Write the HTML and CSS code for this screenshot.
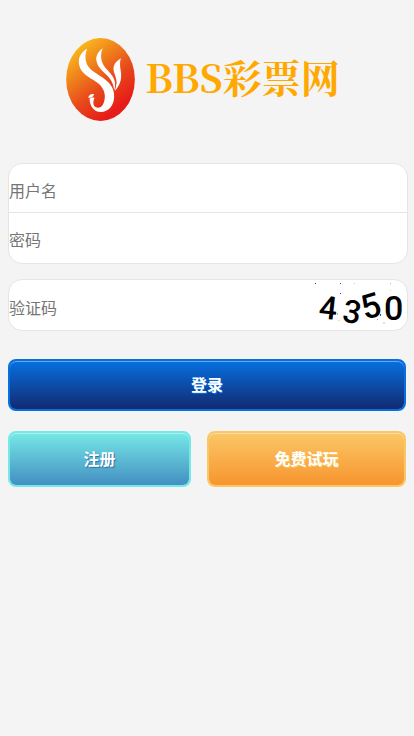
FILE: index.html
```html
<!DOCTYPE html>
<html lang="zh-CN">
<head>
  <meta charset="UTF-8">
  <meta name="viewport" content="width=device-width, initial-scale=1">
  <title>BBS彩票网</title>
  <link rel="stylesheet" href="styles.css">
</head>
<body>

  <header class="logo">
    <svg class="logo-mark" viewBox="22 24 206 249" aria-hidden="true">
      <defs>
        <linearGradient id="flame" x1="0.15" y1="0.05" x2="0.7" y2="0.9">
          <stop offset="0" stop-color="#fbc21b"/>
          <stop offset="0.3" stop-color="#f18a1c"/>
          <stop offset="0.65" stop-color="#e8481b"/>
          <stop offset="1" stop-color="#e61a17"/>
        </linearGradient>
      </defs>
      <ellipse cx="125" cy="148.500" rx="103" ry="124.500" fill="url(#flame)"/>
      <path fill="#fff" d="M85 56 C69 64 59 79 60 98 C62 124 82 137 104 150 C125 163 137 177 138 197 C138 220 129 234 116 233 C104 231 100 219 107 203 C101 202 95 203 92 207 C94 232 107 246 126 246 C149 245 165 227 166 200 C167 178 157 163 140 149 C118 132 91 122 83 100 C78 84 79 69 85 56 Z"/>
      <path fill="#fff" d="M132 55 C117 65 110 78 113 94 C117 116 139 128 151 143 C160 154 164 166 166 181 C171 167 170 151 160 137 C149 121 134 112 129 94 C125 81 126 67 132 55 Z"/>
      <path fill="#fff" d="M186 85 C171 94 163 105 164 118 C165 133 175 145 173 160 C172 168 170 175 168 183 C179 170 187 156 187 137 C187 120 180 107 186 85 Z"/>
      <path fill="#fff" d="M88 203 C91 194 98 190 106 193 C102 202 97 205 88 203 Z"/>
    </svg>
    <h1>BBS彩票网</h1>
  </header>

  <form class="login-form">
    <div class="card">
      <input class="field" type="text" name="username" placeholder="用户名" aria-label="用户名">
      <input class="field" type="password" name="password" placeholder="密码" aria-label="密码">
    </div>

    <div class="card code-card">
      <input class="field" type="text" name="code" placeholder="验证码" aria-label="验证码">
      <svg class="captcha" viewBox="0 0 90 46" role="img" aria-label="4350">
        <text x="5" y="37" font-size="32" transform="rotate(6 14 26)">4</text>
        <text x="29" y="41" font-size="32" transform="rotate(10 38 30)">3</text>
        <text x="47" y="36" font-size="34" transform="rotate(-16 56 24)">5</text>
        <text x="70" y="38" font-size="34">0</text>
        <rect x="1" y="1" width="1" height="1" fill="#1a5c50"/>
        <rect x="26" y="1" width="1" height="1" fill="#5a4aa0"/>
        <rect x="40" y="1" width="1" height="1" fill="#b5cfc0"/>
        <rect x="76" y="1" width="1" height="1" fill="#8fc4b0"/>
        <rect x="26" y="11" width="1" height="1" fill="#4b3fa8"/>
        <rect x="76" y="8" width="1" height="1" fill="#b9dccb"/>
        <rect x="23" y="31" width="1" height="2" fill="#b5d13c"/>
        <rect x="24" y="38" width="2" height="1" fill="#cdeec0"/>
        <rect x="66" y="32" width="1" height="2" fill="#4b3fa8"/>
        <rect x="63" y="37" width="1" height="1" fill="#d07ab8"/>
        <rect x="69" y="40" width="2" height="2" fill="#cfe4f4"/>
      </svg>
    </div>

    <button class="btn login-btn" type="submit">登录</button>

    <div class="btn-row">
      <button class="btn register-btn" type="button">注册</button>
      <button class="btn trial-btn" type="button">免费试玩</button>
    </div>
  </form>

</body>
</html>
```
FILE: styles.css
```css
body {
  margin: 0;
  padding: 38px 8px 0;
  background: #f4f4f4;
  font-family: "Noto Sans CJK SC", sans-serif;
  font-size: 16px;
}

.logo {
  display: flex;
  align-items: center;
  justify-content: center;
  gap: 10px;
  margin-bottom: 42px;
  padding-right: 8px;
}

.logo-mark {
  width: 69px;
  height: 83px;
}

.logo h1 {
  margin: 0;
  padding-bottom: 8px;
  color: #ffa800;
  font-family: "Noto Serif CJK SC", "Noto Sans CJK SC", serif;
  font-size: 39px;
  line-height: 48px;
  white-space: nowrap;
}

.card {
  width: 100%;
  margin-bottom: 15px;
  border: 1px solid #e5e5e5;
  border-radius: 14px;
  background: #fff;
  overflow: hidden;
}

.field {
  display: block;
  box-sizing: border-box;
  width: 100%;
  height: 48px;
  padding: 4px 0 0;
  border: none;
  outline: none;
  background: none;
  font: inherit;
}

.field::placeholder { color: #757575; }

.field + .field {
  height: 51px;
  padding-top: 2px;
  border-top: 1px solid #e5e5e5;
}

.code-card {
  display: flex;
  align-items: center;
  margin-bottom: 28px;
}

.code-card .field {
  flex: 1;
  min-width: 0;
  height: 50px;
}

.captcha {
  flex: none;
  width: 90px;
  height: 46px;
  margin-right: 3px;
}

.captcha text {
  font-family: Roboto, "Liberation Sans", sans-serif;
  font-weight: 500;
  fill: #000;
}

.btn {
  box-sizing: border-box;
  padding: 0 0 2px;
  border: 2px solid;
  border-radius: 8px;
  color: #fff;
  font: inherit;
  font-weight: bold;
  cursor: pointer;
}

.login-btn {
  display: block;
  width: 100%;
  height: 52px;
  border-color: #0670e0;
  background: linear-gradient(#0670e0, #122a70) padding-box, #0670e0;
  box-shadow: inset 0 1px 0 #69a9ec;
  text-shadow: 1px 1px 0 #0670e0;
}

.btn-row {
  display: flex;
  justify-content: space-between;
  margin-top: 20px;
}

.btn-row .btn { height: 56px; }

.register-btn {
  width: 46%;
  border-color: #76e8e5;
  background: linear-gradient(#76e8e5, #438fc2) padding-box, #76e8e5;
  box-shadow: inset 0 1px 0 #adf1ef;
  text-shadow: 1px 1px 1px #2c6fa8;
}

.trial-btn {
  width: 50%;
  border-color: #fbc766;
  background: linear-gradient(#fbc766, #f7952f) padding-box, #fbc766;
  box-shadow: inset 0 1px 0 #fddda3;
  text-shadow: 1px 1px 0 #fbc766;
}
```
